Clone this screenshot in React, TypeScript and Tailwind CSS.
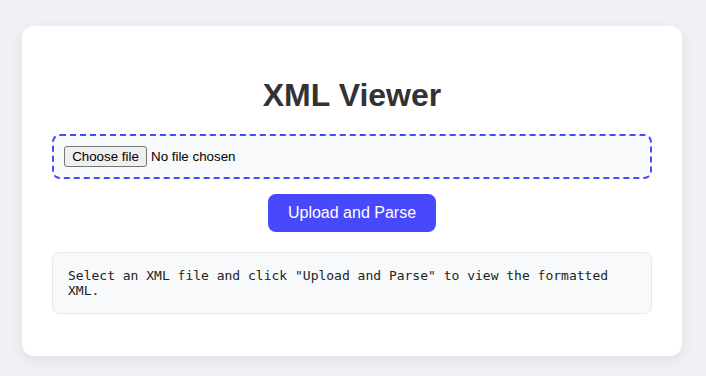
import React from "react";

export default function App() {
  return (
    <div className="min-h-[376px] w-full bg-[#f0f1f4] pl-[22px] pt-[26px] pb-[20px]" style={{ fontFamily: '"Liberation Sans", Arial, sans-serif' }}>
      <div className="w-[660px] rounded-[12px] bg-white px-[30px] pt-[30px] pb-[42px] shadow-[0_4px_14px_rgba(0,0,0,0.08)]">
        <h1 className="mt-[21px] mb-[20px] text-center text-[32px] font-bold leading-[37px] text-[#333333]">XML Viewer</h1>
        <div className="rounded-[8px] border-2 border-dashed border-[#4848fd] bg-[#f8f9fa] p-[10px]">
          <label className="flex h-[21px] items-center text-[13.33px] text-black">
            <input type="file" className="hidden" />
            <span className="mr-[4px] flex h-[21px] w-[83px] items-center justify-center rounded-[3px] border border-[#767676] bg-[#efefef] leading-[15px]">Choose file</span>
            <span className="leading-[15px]">No file chosen</span>
          </label>
        </div>
        <div className="mt-[15px] flex justify-center">
          <button className="h-[38px] w-[168px] rounded-[8px] bg-[#4848fd] text-[16px] text-white">Upload and Parse</button>
        </div>
        <pre
          className="mt-[20px] whitespace-pre-wrap rounded-[8px] border border-[#e6e8eb] bg-[#f8f9fa] p-[15px] text-[13px] leading-[15px] text-[#222222]"
          style={{ fontFamily: '"DejaVu Sans Mono", monospace' }}
        >
          Select an XML file and click "Upload and Parse" to view the formatted XML.
        </pre>
      </div>
    </div>
  );
}
